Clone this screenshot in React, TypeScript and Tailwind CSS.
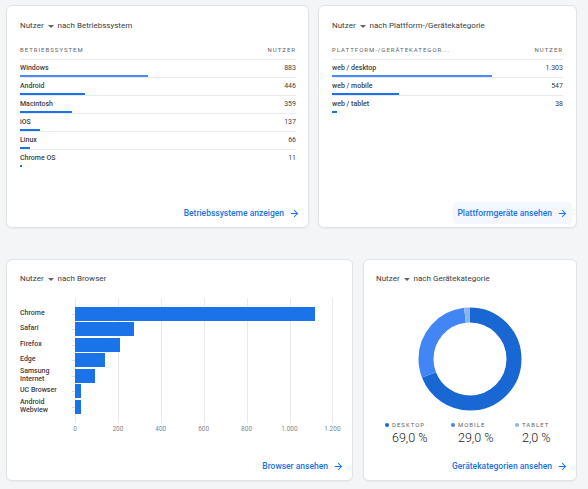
import React from "react";

const Arrow = () => (
  <svg width="11" height="11" viewBox="0 0 24 24" className="ml-[5px]" fill="#1a73e8">
    <path d="M12 4l-1.41 1.41L16.17 11H4v2h12.17l-5.58 5.59L12 20l8-8z" />
  </svg>
);

const Title = ({ text }: { text: string }) => (
  <div className="flex items-center h-[12px] leading-[12px] text-[8px] text-[#3c4043] whitespace-nowrap">
    <span>Nutzer</span>
    <svg width="6" height="3" viewBox="0 0 6 3" className="mx-[4px]">
      <path d="M0 0h6L3 3z" fill="#5f6368" />
    </svg>
    <span>{text}</span>
  </div>
);

const LinkBtn = ({ text, bg }: { text: string; bg?: boolean }) => (
  <div className="mt-auto flex justify-end pr-[4px] pb-[3px]">
    <div
      className={
        "h-[22px] px-[4px] flex items-center rounded-[4px] text-[8.5px] font-medium text-[#1a73e8] " +
        (bg ? "bg-[#f4f8fe]" : "")
      }
    >
      <span>{text}</span>
      <Arrow />
    </div>
  </div>
);

const Card = ({ className, children }: { className: string; children: React.ReactNode }) => (
  <div
    className={
      "relative flex flex-col bg-white border border-[#e1e3e6] rounded-[6px] shadow-[0_1px_2px_rgba(60,64,67,0.06)] " +
      className
    }
  >
    {children}
  </div>
);

type Row = { label: string; value: number; display: string };

const Table = ({ header, rows, width }: { header: string; rows: Row[]; width: number }) => {
  const total = rows.reduce((s, r) => s + r.value, 0);
  return (
    <div className="mt-[12px]">
      <div className="flex justify-between h-[12px] leading-[12px] text-[6px] tracking-[1px] text-[#5f6368] pb-[3px] box-content border-b border-[#e8eaed]">
        <span>{header}</span>
        <span>NUTZER</span>
      </div>
      {rows.map((r, i) => (
        <div
          key={r.label}
          className={"pt-[2px] h-[18px] " + (i < rows.length - 1 ? "border-b border-[#e8eaed]" : "")}
        >
          <div className="flex justify-between h-[12px] leading-[12px] text-[7px]">
            <span className="font-medium text-[#3c4043]">{r.label}</span>
            <span className="text-[#3c4043]">{r.display}</span>
          </div>
          <div
            className={"mt-[1px] h-[2px] " + (i === 0 ? "bg-[#4a8af4]" : "bg-[#1a73e8]")}
            style={{ width: Math.max(2, (r.value / total) * width) }}
          />
        </div>
      ))}
    </div>
  );
};

const osRows: Row[] = [
  { label: "Windows", value: 883, display: "883" },
  { label: "Android", value: 446, display: "446" },
  { label: "Macintosh", value: 359, display: "359" },
  { label: "iOS", value: 137, display: "137" },
  { label: "Linux", value: 66, display: "66" },
  { label: "Chrome OS", value: 11, display: "11" },
];

const platRows: Row[] = [
  { label: "web / desktop", value: 1303, display: "1.303" },
  { label: "web / mobile", value: 547, display: "547" },
  { label: "web / tablet", value: 38, display: "38" },
];

const browsers = [
  { label: ["Chrome"], value: 1119 },
  { label: ["Safari"], value: 275 },
  { label: ["Firefox"], value: 209 },
  { label: ["Edge"], value: 140 },
  { label: ["Samsung", "Internet"], value: 93 },
  { label: ["UC Browser"], value: 28 },
  { label: ["Android", "Webview"], value: 28 },
];

const STEP = 42.9 / 200;
const ticks = ["0", "200", "400", "600", "800", "1.000", "1.200"];

const BrowserChart = () => (
  <div className="mt-[13px]">
    <div className="relative h-[125px] pt-[8px]">
      <div className="absolute top-0 bottom-0 left-[55px] right-0">
        {ticks.map((t, i) => (
          <div
            key={t}
            className="absolute top-0 bottom-0 w-px bg-[#e8eaed]"
            style={{ left: i * 42.9 }}
          />
        ))}
      </div>
      {browsers.map((b) => (
        <div key={b.label.join(" ")} className="relative flex items-center h-[15.5px]">
          <div className="w-[55px] text-[7px] leading-[7.7px] font-medium text-[#3c4043]">
            {b.label.map((l) => (
              <div key={l}>{l}</div>
            ))}
          </div>
          <div className="relative h-[14px] flex items-center">
            <span className="absolute left-[-3px] top-[7px] w-[3px] h-px bg-[#dadce0]" />
            <div className="h-[14px] bg-[#1a73e8]" style={{ width: b.value * STEP }} />
          </div>
        </div>
      ))}
    </div>
    <div className="relative h-[12px] ml-[55px]">
      {ticks.map((t, i) => (
        <span
          key={t}
          className="absolute top-0 leading-[12px] text-[6.5px] text-[#80868b] -translate-x-1/2"
          style={{ left: i * 42.9 }}
        >
          {t}
        </span>
      ))}
    </div>
  </div>
);

const C = 2 * Math.PI * 44;

const Donut = () => (
  <svg width="104" height="104" viewBox="0 0 104 104">
    <g transform="rotate(-90 52 52)">
      <circle cx="52" cy="52" r="44" fill="none" stroke="#1967d2" strokeWidth="15" strokeDasharray={`${0.69 * C} ${C}`} />
      <circle
        cx="52"
        cy="52"
        r="44"
        fill="none"
        stroke="#4285f4"
        strokeWidth="15"
        strokeDasharray={`${0.29 * C} ${C}`}
        strokeDashoffset={-0.69 * C}
      />
      <circle
        cx="52"
        cy="52"
        r="44"
        fill="none"
        stroke="#8ab4f8"
        strokeWidth="15"
        strokeDasharray={`${0.02 * C} ${C}`}
        strokeDashoffset={-0.98 * C}
      />
    </g>
  </svg>
);

const legend = [
  { label: "DESKTOP", value: "69,0 %", color: "bg-[#1967d2]" },
  { label: "MOBILE", value: "29,0 %", color: "bg-[#4285f4]" },
  { label: "TABLET", value: "2,0 %", color: "bg-[#8ab4f8]" },
];

export default function App() {
  return (
    <div className="w-[588px] h-[489px] overflow-hidden bg-[#f4f5f7] pl-[6px] pr-[11px] pt-[5px] font-['Roboto',sans-serif]">
      <div className="flex gap-[9px] h-[223px]">
        <Card className="w-[303px] pt-[14px]">
          <div className="pl-[13px] pr-[12px]">
            <Title text="nach Betriebssystem" />
            <Table header="BETRIEBSSYSTEM" rows={osRows} width={276} />
          </div>
          <LinkBtn text="Betriebssysteme anzeigen" />
        </Card>
        <Card className="flex-1 pt-[14px]">
          <div className="pl-[13px] pr-[13px]">
            <Title text="nach Plattform-/Gerätekategorie" />
            <Table header="PLATTFORM-/GERÄTEKATEGOR..." rows={platRows} width={232} />
          </div>
          <LinkBtn text="Plattformgeräte ansehen" bg />
        </Card>
      </div>
      <div className="flex gap-[10px] h-[222px] mt-[31px]">
        <Card className="w-[347px] pt-[13px]">
          <div className="pl-[13px]">
            <Title text="nach Browser" />
            <BrowserChart />
          </div>
          <LinkBtn text="Browser ansehen" />
        </Card>
        <Card className="flex-1 pt-[13px]">
          <div className="pl-[12px]">
            <Title text="nach Gerätekategorie" />
          </div>
          <div className="mt-[22px] flex justify-center">
            <Donut />
          </div>
          <div className="mt-[10px] pl-[21px] grid grid-cols-[66px_64px_auto]">
            {legend.map((l) => (
              <div key={l.label}>
                <div className="flex items-center h-[8px] leading-[8px]">
                  <span className={"w-[4px] h-[4px] rounded-full mr-[3px] " + l.color} />
                  <span className="text-[6px] tracking-[1px] text-[#5f6368]">{l.label}</span>
                </div>
                <div className="mt-[2px] pl-[7px] h-[14px] leading-[14px] text-[12.5px] font-light text-[#202124]">
                  {l.value}
                </div>
              </div>
            ))}
          </div>
          <LinkBtn text="Gerätekategorien ansehen" />
        </Card>
      </div>
    </div>
  );
}
